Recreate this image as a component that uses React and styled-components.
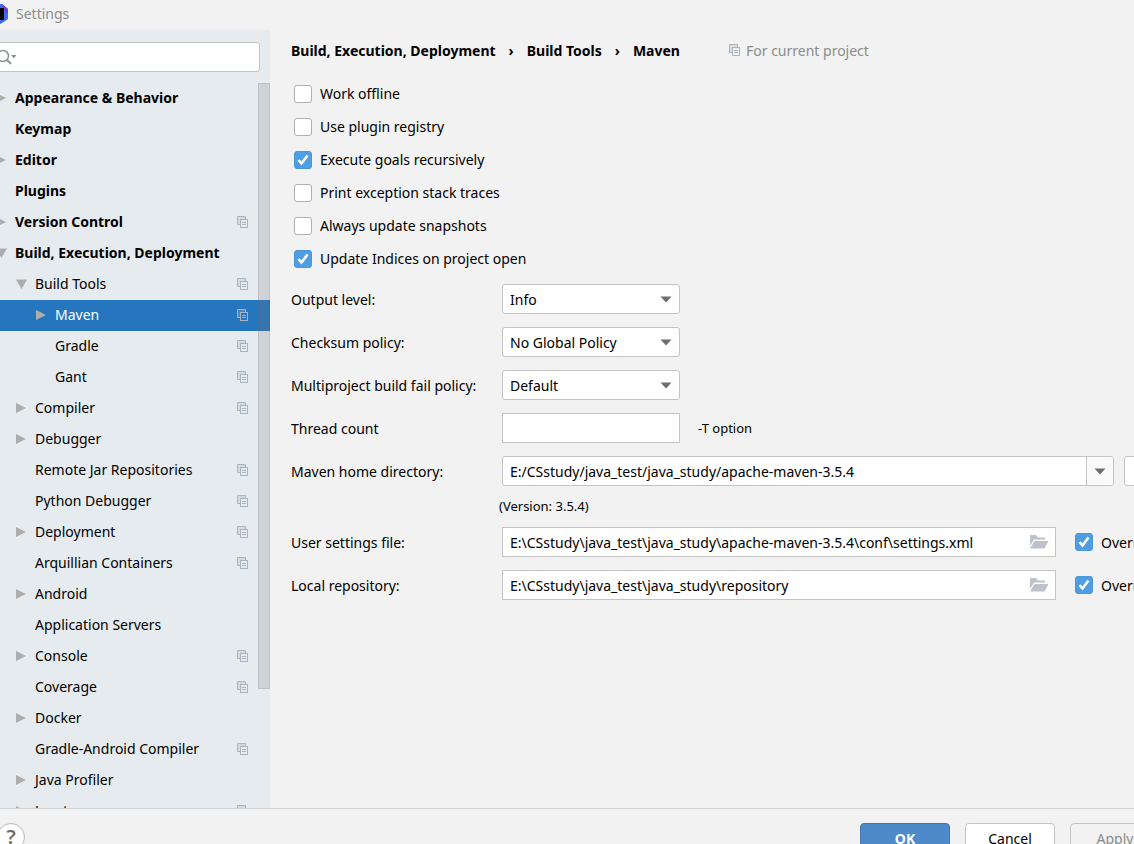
import React, { useState } from 'react';
import styled, { createGlobalStyle } from 'styled-components';

const colors = {
  window: '#f2f2f2',
  sidebar: '#e6ebf0',
  selection: '#2675bf',
  border: '#c4c4c4',
  text: '#000000',
  muted: '#8c8c8c',
  arrow: '#adadad',
  accent: '#4f9ee3',
};

const GlobalStyle = createGlobalStyle`
  * {
    box-sizing: border-box;
  }

  body {
    margin: 0;
    overflow: hidden;
    background: ${colors.window};
  }

  body, button, input, select {
    font-family: 'Noto Sans', 'Open Sans', sans-serif;
    font-size: 14px;
    color: ${colors.text};
  }
`;

const Window = styled.div`
  display: flex;
  flex-direction: column;
  height: 100vh;
  overflow: hidden;
`;

const TitleBar = styled.header`
  display: flex;
  align-items: center;
  flex: none;
  gap: 8px;
  height: 30px;
  padding-bottom: 3px;
  color: ${colors.muted};
`;

const Body = styled.div`
  display: flex;
  flex: 1;
  min-height: 0;
`;

const Sidebar = styled.aside`
  display: flex;
  flex-direction: column;
  flex: none;
  width: 270px;
  overflow: hidden;
  background: ${colors.sidebar};
`;

const SearchBox = styled.label`
  display: flex;
  align-items: center;
  flex: none;
  gap: 4px;
  height: 30px;
  margin: 12px 10px 11px -5px;
  padding-left: 1px;
  background: #ffffff;
  border: 1px solid ${colors.border};
  border-radius: 3px;
`;

const SearchInput = styled.input`
  flex: 1;
  min-width: 0;
  border: none;
  outline: none;
  background: transparent;
`;

const TreeArea = styled.div`
  position: relative;
  flex: 1;
  min-height: 0;
  overflow: hidden;
`;

const Tree = styled.ul`
  margin: 0;
  padding: 0;
  list-style: none;
`;

const TreeRow = styled.li`
  display: flex;
  align-items: center;
  height: 31px;
  margin-left: -5px;
  padding: 0 21px 2px ${({ $level }) => $level * 20}px;
  cursor: default;
  white-space: nowrap;
  font-weight: ${({ $level }) => ($level === 0 ? 700 : 400)};
  color: ${({ $selected }) => ($selected ? '#ffffff' : colors.text)};
  background: ${({ $selected }) => ($selected ? colors.selection : 'transparent')};
`;

const ArrowSlot = styled.span`
  display: flex;
  flex: none;
  width: 20px;
`;

const RowLabel = styled.span`
  flex: 1;
`;

const ScrollThumb = styled.div`
  position: absolute;
  top: 0;
  right: 0;
  width: 12px;
  height: 606px;
  background: rgba(115, 115, 115, 0.2);
  border: 1px solid rgba(89, 89, 89, 0.15);
`;

const Main = styled.main`
  flex: 1;
  min-width: 0;
  overflow: hidden;
  padding: 10px 0 0 21px;
`;

const Breadcrumbs = styled.nav`
  display: flex;
  align-items: center;
  gap: 13px;
  height: 20px;
  font-weight: 700;
  white-space: nowrap;
`;

const Scope = styled.span`
  display: flex;
  align-items: center;
  gap: 5px;
  margin-left: 36px;
  font-weight: 400;
  color: ${colors.muted};
`;

const Options = styled.div`
  display: flex;
  flex-direction: column;
  margin: 17px 0 9px 3px;
`;

const CheckLabel = styled.label`
  display: flex;
  align-items: center;
  gap: 8px;
  height: 33px;
  white-space: nowrap;
`;

const CheckBox = styled.span`
  position: relative;
  display: flex;
  flex: none;
  width: 18px;
  height: 18px;

  svg {
    position: absolute;
    top: 0;
    left: 0;
    pointer-events: none;
  }
`;

const CheckInput = styled.input`
  appearance: none;
  width: 18px;
  height: 18px;
  margin: 0;
  background: #ffffff;
  border: 1px solid #b0b0b0;
  border-radius: 3px;

  &:checked {
    background: ${colors.accent};
    border-color: #4b97d9;
  }
`;

/* The form is wider than the pane, its right end is scrolled out of view. */
const Form = styled.form`
  display: flex;
  flex-direction: column;
  gap: 13px;
  margin-right: -70px;
`;

const FormRow = styled.div`
  display: flex;
  align-items: center;
  height: 30px;
`;

const FieldLabel = styled.label`
  flex: none;
  width: 211px;
  white-space: nowrap;
`;

const SelectBox = styled.div`
  position: relative;
  width: 178px;
  height: 30px;

  svg {
    position: absolute;
    top: 12px;
    right: 8px;
    pointer-events: none;
  }
`;

const Select = styled.select`
  appearance: none;
  width: 100%;
  height: 100%;
  padding: 0 28px 0 7px;
  background: #ffffff;
  border: 1px solid ${colors.border};
  border-radius: 3px;
`;

const TextBox = styled.input`
  width: 178px;
  height: 30px;
  padding: 0 7px;
  background: #ffffff;
  border: 1px solid ${colors.border};
  outline: none;
`;

const Hint = styled.span`
  margin-left: 18px;
  font-size: 13px;
`;

const FieldBox = styled.div`
  display: flex;
  align-items: center;
  flex: 1;
  min-width: 0;
  height: 30px;
  overflow: hidden;
  background: #ffffff;
  border: 1px solid ${colors.border};
  border-radius: ${({ $rounded }) => ($rounded ? '3px' : '0')};
`;

const FieldInput = styled.input`
  flex: 1;
  min-width: 0;
  padding: 0 7px;
  border: none;
  outline: none;
  background: transparent;
`;

const DropButton = styled.button`
  display: flex;
  align-items: center;
  justify-content: center;
  width: 27px;
  height: 100%;
  padding: 0;
  background: #fafafa;
  border: none;
  border-left: 1px solid ${colors.border};
`;

const FolderButton = styled.button`
  display: flex;
  padding: 0;
  margin-right: 6px;
  background: none;
  border: none;
`;

const Trailing = styled.div`
  flex: none;
  width: ${({ $width }) => $width}px;
`;

const BrowseButton = styled.button`
  width: 30px;
  height: 30px;
  margin-left: 10px;
  padding: 0;
  background: #ffffff;
  border: 1px solid ${colors.border};
  border-radius: 3px;
`;

const OverrideWrap = styled.div`
  padding-left: 19px;
`;

const Version = styled.div`
  height: 15px;
  margin-left: 208px;
  font-size: 13px;
  line-height: 15px;
`;

const Footer = styled.footer`
  display: flex;
  flex: none;
  justify-content: space-between;
  height: 36px;
  padding-top: 14px;
  overflow: hidden;
  border-top: 1px solid #d1d1d1;
`;

const HelpButton = styled.button`
  width: 28px;
  height: 28px;
  margin-left: -3px;
  padding: 0;
  font-size: 20px;
  font-weight: 600;
  line-height: 26px;
  color: #6e6e6e;
  background: #ffffff;
  border: 1px solid #b8b8b8;
  border-radius: 50%;
`;

const Actions = styled.div`
  display: flex;
  gap: 15px;
  margin-right: -26px;
`;

const ActionButton = styled.button`
  width: 90px;
  height: 30px;
  padding: 0;
  font-weight: ${({ $primary }) => ($primary ? 700 : 400)};
  color: ${({ $primary }) => ($primary ? '#ffffff' : colors.text)};
  background: ${({ $primary }) => ($primary ? '#4e8ac9' : '#ffffff')};
  border: 1px solid ${({ $primary }) => ($primary ? '#4478ad' : colors.border)};
  border-radius: 4px;

  &:disabled {
    color: ${colors.muted};
    background: ${colors.window};
  }
`;

const tree = [
  { label: 'Appearance & Behavior', level: 0, arrow: 'closed' },
  { label: 'Keymap', level: 0 },
  { label: 'Editor', level: 0, arrow: 'closed' },
  { label: 'Plugins', level: 0 },
  { label: 'Version Control', level: 0, arrow: 'closed', project: true },
  { label: 'Build, Execution, Deployment', level: 0, arrow: 'open' },
  { label: 'Build Tools', level: 1, arrow: 'open', project: true },
  { label: 'Maven', level: 2, arrow: 'closed', project: true },
  { label: 'Gradle', level: 2, project: true },
  { label: 'Gant', level: 2, project: true },
  { label: 'Compiler', level: 1, arrow: 'closed', project: true },
  { label: 'Debugger', level: 1, arrow: 'closed' },
  { label: 'Remote Jar Repositories', level: 1, project: true },
  { label: 'Python Debugger', level: 1, project: true },
  { label: 'Deployment', level: 1, arrow: 'closed', project: true },
  { label: 'Arquillian Containers', level: 1, project: true },
  { label: 'Android', level: 1, arrow: 'closed' },
  { label: 'Application Servers', level: 1 },
  { label: 'Console', level: 1, arrow: 'closed', project: true },
  { label: 'Coverage', level: 1, project: true },
  { label: 'Docker', level: 1, arrow: 'closed' },
  { label: 'Gradle-Android Compiler', level: 1, project: true },
  { label: 'Java Profiler', level: 1, arrow: 'closed' },
  { label: 'Jupyter', level: 1, arrow: 'closed', project: true },
];

const options = [
  { label: 'Work offline', checked: false },
  { label: 'Use plugin registry', checked: false },
  { label: 'Execute goals recursively', checked: true },
  { label: 'Print exception stack traces', checked: false },
  { label: 'Always update snapshots', checked: false },
  { label: 'Update Indices on project open', checked: true },
];

function TreeArrow({ open }) {
  return (
    <svg width="12" height="12" viewBox="0 0 12 12" fill={colors.arrow}>
      <path d={open ? 'M1 1.500H12L6.500 11Z' : 'M1 1V11L11 6Z'} />
    </svg>
  );
}

function ProjectIcon() {
  return (
    <svg width="12" height="12" viewBox="0 0 12 12" fill="none" stroke="#a9b4be">
      <path d="M1 1H8V3H3V8H1Z" fill="#a9b4be" fillOpacity="0.3" stroke="none" />
      <path d="M3 8.500H.5V.5H8.500V3" />
      <rect x="3.500" y="3.500" width="7" height="8" />
      <path d="M5 6.500H9M5 8.500H9" />
    </svg>
  );
}

function DropArrow() {
  return (
    <svg width="12" height="7" viewBox="0 0 12 7" fill="#6e6e6e">
      <path d="M0.500 0.500H11.500L6 6.500Z" />
    </svg>
  );
}

function FolderIcon() {
  return (
    <svg width="20" height="14" viewBox="0 0 20 14" fill="#bdc3c8">
      <path d="M1 0H7L9 2.500H16V4.500H5L1 11Z" />
      <path d="M5.500 6H19.500L15.500 13.500H1Z" />
    </svg>
  );
}

function SearchIcon() {
  return (
    <svg width="19" height="16" viewBox="0 0 19 16" fill="none" stroke="#8a939b" strokeWidth="1.500">
      <circle cx="6" cy="7" r="5.500" />
      <path d="M10 11L14 15" strokeWidth="2" />
      <path d="M14 6H19.500L16.700 9.500Z" fill="#8a939b" stroke="none" />
    </svg>
  );
}

function Logo() {
  return (
    <svg width="8" height="20" viewBox="0 0 8 20">
      <path d="M0 0L2 0L8 5V15L2 19L0 20Z" fill="#3b6cf0" />
      <path d="M2 0L8 5V10L3 5Z" fill="#6a45c9" />
      <path d="M0 4H4V16H0Z" fill="#000000" />
    </svg>
  );
}

function Check({ label, defaultChecked }) {
  const [checked, setChecked] = useState(defaultChecked);

  return (
    <CheckLabel>
      <CheckBox>
        <CheckInput type="checkbox" checked={checked} onChange={() => setChecked(!checked)} />
        {checked && (
          <svg width="18" height="18" viewBox="0 0 18 18" fill="none" stroke="#ffffff" strokeWidth="2.500">
            <path d="M4.500 9L7.500 12.500L13.500 4.500" />
          </svg>
        )}
      </CheckBox>
      {label}
    </CheckLabel>
  );
}

function SelectRow({ id, label, value }) {
  return (
    <FormRow>
      <FieldLabel htmlFor={id}>{label}</FieldLabel>
      <SelectBox>
        <Select id={id}>
          <option>{value}</option>
        </Select>
        <DropArrow />
      </SelectBox>
    </FormRow>
  );
}

function FileRow({ id, label, value }) {
  return (
    <FormRow>
      <FieldLabel htmlFor={id}>{label}</FieldLabel>
      <FieldBox>
        <FieldInput id={id} defaultValue={value} />
        <FolderButton type="button" aria-label="Browse">
          <FolderIcon />
        </FolderButton>
      </FieldBox>
      <Trailing $width={148}>
        <OverrideWrap>
          <Check label="Override" defaultChecked />
        </OverrideWrap>
      </Trailing>
    </FormRow>
  );
}

function App() {
  const [selected, setSelected] = useState('Maven');

  return (
    <Window>
      <GlobalStyle />
      <TitleBar>
        <Logo />
        Settings
      </TitleBar>
      <Body>
        <Sidebar>
          <SearchBox>
            <SearchIcon />
            <SearchInput type="text" aria-label="Search settings" />
          </SearchBox>
          <TreeArea>
            <Tree>
              {tree.map((item) => (
                <TreeRow
                  key={item.label}
                  $level={item.level}
                  $selected={item.label === selected}
                  onClick={() => setSelected(item.label)}
                >
                  <ArrowSlot>{item.arrow && <TreeArrow open={item.arrow === 'open'} />}</ArrowSlot>
                  <RowLabel>{item.label}</RowLabel>
                  {item.project && <ProjectIcon />}
                </TreeRow>
              ))}
            </Tree>
            <ScrollThumb />
          </TreeArea>
        </Sidebar>
        <Main>
          <Breadcrumbs>
            <span>Build, Execution, Deployment</span>
            <span>›</span>
            <span>Build Tools</span>
            <span>›</span>
            <span>Maven</span>
            <Scope>
              <ProjectIcon />
              For current project
            </Scope>
          </Breadcrumbs>
          <Options>
            {options.map((option) => (
              <Check key={option.label} label={option.label} defaultChecked={option.checked} />
            ))}
          </Options>
          <Form>
            <SelectRow id="output" label="Output level:" value="Info" />
            <SelectRow id="checksum" label="Checksum policy:" value="No Global Policy" />
            <SelectRow id="fail" label="Multiproject build fail policy:" value="Default" />
            <FormRow>
              <FieldLabel htmlFor="threads">Thread count</FieldLabel>
              <TextBox id="threads" />
              <Hint>-T option</Hint>
            </FormRow>
            <FormRow>
              <FieldLabel htmlFor="home">Maven home directory:</FieldLabel>
              <FieldBox $rounded>
                <FieldInput id="home" defaultValue="E:/CSstudy/java_test/java_study/apache-maven-3.5.4" />
                <DropButton type="button" aria-label="Recent directories">
                  <DropArrow />
                </DropButton>
              </FieldBox>
              <Trailing $width={90}>
                <BrowseButton type="button">...</BrowseButton>
              </Trailing>
            </FormRow>
            <Version>(Version: 3.5.4)</Version>
            <FileRow
              id="settings"
              label="User settings file:"
              value="E:\CSstudy\java_test\java_study\apache-maven-3.5.4\conf\settings.xml"
            />
            <FileRow id="repository" label="Local repository:" value="E:\CSstudy\java_test\java_study\repository" />
          </Form>
        </Main>
      </Body>
      <Footer>
        <HelpButton type="button">?</HelpButton>
        <Actions>
          <ActionButton type="button" $primary>OK</ActionButton>
          <ActionButton type="button">Cancel</ActionButton>
          <ActionButton type="button" disabled>Apply</ActionButton>
        </Actions>
      </Footer>
    </Window>
  );
}

export default App;
